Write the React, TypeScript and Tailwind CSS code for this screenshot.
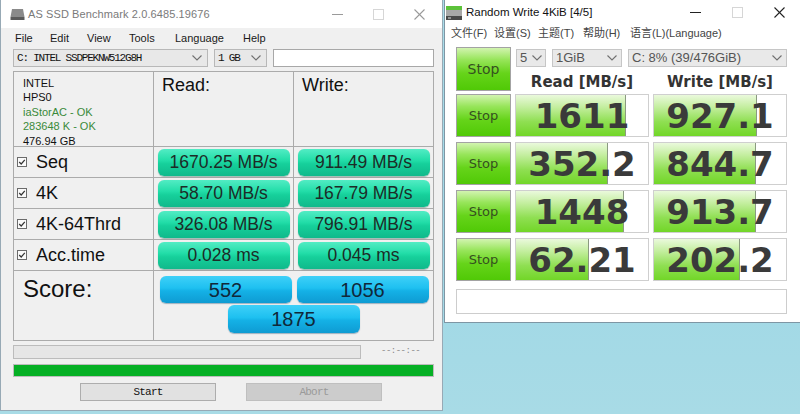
import React from "react";

const Chevron = () => (
  <svg width="10" height="6" viewBox="0 0 10 6">
    <polyline points="0.5,0.5 5,5 9.5,0.5" fill="none" stroke="#707070" strokeWidth="1.1" />
  </svg>
);

const MinIcon = ({ c }: { c: string }) => (
  <svg width="11" height="11" viewBox="0 0 11 11">
    <line x1="0" y1="5.5" x2="11" y2="5.5" stroke={c} strokeWidth="1" />
  </svg>
);
const MaxIcon = () => (
  <svg width="11" height="11" viewBox="0 0 11 11">
    <rect x="0.5" y="0.5" width="10" height="10" fill="none" stroke="#d6d6d6" strokeWidth="1" />
  </svg>
);
const CloseIcon = ({ c }: { c: string }) => (
  <svg width="11" height="11" viewBox="0 0 11 11">
    <line x1="0.5" y1="0.5" x2="10.5" y2="10.5" stroke={c} strokeWidth="1.1" />
    <line x1="10.5" y1="0.5" x2="0.5" y2="10.5" stroke={c} strokeWidth="1.1" />
  </svg>
);

const Check = () => (
  <svg width="10" height="10" viewBox="0 0 10 10">
    <rect x="0.5" y="0.5" width="9" height="9" fill="#fafafa" stroke="#6b6b6b" strokeWidth="1" />
    <polyline points="2.2,5 4.2,7 7.8,2.8" fill="none" stroke="#333" strokeWidth="1.2" />
  </svg>
);

const teal =
  "bg-[linear-gradient(to_bottom,#52ecc4_0%,#22dda8_42%,#16d09b_55%,#10b98b_100%)] shadow-[0_1px_1px_rgba(0,80,60,0.35)]";
const blue =
  "bg-[linear-gradient(to_bottom,#3ed0f8_0%,#1ec0f0_45%,#14b1e6_55%,#0e9bd2_100%)] shadow-[0_1px_1px_rgba(0,60,100,0.35)]";

function LeftWindow() {
  const rows = [
    { n: "Seq", r: "1670.25 MB/s", w: "911.49 MB/s" },
    { n: "4K", r: "58.70 MB/s", w: "167.79 MB/s" },
    { n: "4K-64Thrd", r: "326.08 MB/s", w: "796.91 MB/s" },
    { n: "Acc.time", r: "0.028 ms", w: "0.045 ms" },
  ];
  return (
    <div className="w-[443px] h-[411px] shrink-0 flex flex-col bg-[#f0f0f0] border-l border-r border-b border-[#97a9b5] font-['Liberation_Sans',Arial,sans-serif]">
      {/* title */}
      <div className="h-[28px] bg-white flex items-center pl-[9px]">
        <svg width="15" height="12" viewBox="0 0 15 12">
          <path d="M2 1 H13 L14.5 9 H0.5 Z" fill="#8a8a8a" />
          <rect x="0.5" y="9" width="14" height="3" fill="#5a5a5a" />
        </svg>
        <span className="ml-[3px] text-[11px] text-[#7a7a7a] tracking-[0.1px]">AS SSD Benchmark 2.0.6485.19676</span>
        <div className="ml-auto flex mr-[2px]">
          <div className="w-[41px] flex justify-center"><MinIcon c="#9a9a9a" /></div>
          <div className="w-[41px] flex justify-center"><MaxIcon /></div>
          <div className="w-[41px] flex justify-center"><CloseIcon c="#9a9a9a" /></div>
        </div>
      </div>
      {/* menu */}
      <div className="h-[20px] flex items-center pl-[14px] text-[11px] text-[#1a1a1a]">
        <span className="w-[35px]">File</span>
        <span className="w-[37px]">Edit</span>
        <span className="w-[42px]">View</span>
        <span className="w-[46px]">Tools</span>
        <span className="w-[68px]">Language</span>
        <span>Help</span>
      </div>
      {/* combos */}
      <div className="mt-[1px] h-[18px] flex pl-[12px] gap-[6px]">
        <div className="w-[195px] h-[18px] border border-[#b8b8b8] bg-[#e8e8e8] flex items-center pl-[3px] pr-[5px]">
          <span className="font-['Liberation_Mono',monospace] text-[11px] tracking-[-1.2px] text-[#111]">C: INTEL SSDPEKNW512G8H</span>
          <span className="ml-auto"><Chevron /></span>
        </div>
        <div className="w-[53px] h-[18px] border border-[#b8b8b8] bg-[#e8e8e8] flex items-center pl-[3px] pr-[5px]">
          <span className="font-['Liberation_Mono',monospace] text-[11px] tracking-[-1.2px] text-[#111]">1 GB</span>
          <span className="ml-auto"><Chevron /></span>
        </div>
        <div className="w-[161px] h-[18px] border border-[#a8a8a8] bg-white" />
      </div>
      {/* grid */}
      <div className="ml-[12px] mt-[4px] w-[421px] border-l border-t border-[#ababab]">
        <div className="h-[75px] flex border-b border-[#ababab]">
          <div className="w-[140px] border-r border-[#ababab] pl-[9px] pt-[4px] text-[11px] leading-[14.4px]">
            <div className="text-[#111]">INTEL</div>
            <div className="text-[#111]">HPS0</div>
            <div className="text-[#3a8a3a]">iaStorAC - OK</div>
            <div className="text-[#3a8a3a]">283648 K - OK</div>
            <div className="text-[#111]">476.94 GB</div>
          </div>
          <div className="w-[140px] border-r border-[#ababab] pl-[8px] pt-[2px] text-[18px] leading-[22px] text-[#111]">Read:</div>
          <div className="w-[140px] border-r border-[#ababab] pl-[8px] pt-[2px] text-[18px] leading-[22px] text-[#111]">Write:</div>
        </div>
        {rows.map((r) => (
          <div key={r.n} className="h-[31px] flex border-b border-[#ababab]">
            <div className="w-[140px] border-r border-[#ababab] pl-[3px] flex items-center">
              <Check />
              <span className="ml-[9px] text-[18px] text-[#111]">{r.n}</span>
            </div>
            <div className="w-[140px] border-r border-[#ababab] flex justify-center items-center">
              <div className={`w-[132px] h-[27px] rounded-[6px] ${teal} flex items-center justify-center text-[17.5px] text-[#1d2b27]`}>{r.r}</div>
            </div>
            <div className="w-[140px] border-r border-[#ababab] flex justify-center items-center">
              <div className={`w-[132px] h-[27px] rounded-[6px] ${teal} flex items-center justify-center text-[17.5px] text-[#1d2b27]`}>{r.w}</div>
            </div>
          </div>
        ))}
        <div className="h-[70px] flex border-b border-[#ababab]">
          <div className="w-[140px] border-r border-[#ababab] pl-[9px] pt-[4px] text-[24px] leading-[28px] text-[#111]">Score:</div>
          <div className="flex-1 border-r border-[#ababab] pt-[5px] flex flex-col items-center gap-[2px]">
            <div className="flex gap-[5px] pl-[1px]">
              <div className={`w-[132px] h-[27px] rounded-[6px] ${blue} flex items-center justify-center text-[20px] text-[#10283a]`}>552</div>
              <div className={`w-[132px] h-[27px] rounded-[6px] ${blue} flex items-center justify-center text-[20px] text-[#10283a]`}>1056</div>
            </div>
            <div className={`w-[132px] h-[28px] rounded-[6px] ${blue} flex items-center justify-center text-[20px] text-[#10283a]`}>1875</div>
          </div>
        </div>
      </div>
      {/* progress */}
      <div className="mt-[4px] ml-[12px] h-[14px] flex items-center">
        <div className="w-[348px] h-[14px] border border-[#bcbcbc] bg-[#e6e6e6]" />
        <span className="ml-[20px] font-['Liberation_Mono',monospace] text-[9px] tracking-[-0.5px] text-[#888]">--:--:--</span>
      </div>
      <div className="mt-[5px] ml-[12px] w-[421px] h-[13px] border border-[#bcbcbc] bg-[#06b025]" />
      <div className="mt-[6px] pl-[79px] flex gap-[30px]">
        <div className="w-[136px] h-[18px] border border-[#adadad] bg-[#e1e1e1] flex items-center justify-center font-['Liberation_Mono',monospace] text-[11px] tracking-[-0.8px] text-[#111]">Start</div>
        <div className="w-[136px] h-[18px] border border-[#bfbfbf] bg-[#cccccc] flex items-center justify-center font-['Liberation_Mono',monospace] text-[11px] tracking-[-0.8px] text-[#9a9a9a]">Abort</div>
      </div>
    </div>
  );
}

const stopBg =
  "bg-[linear-gradient(to_bottom,#d2f4b0_0%,#97e55a_28%,#66d41a_60%,#50c906_100%)] border border-[#a3a3a3]";
const fillBg =
  "bg-[linear-gradient(to_bottom,#eaf9dc_0%,#c3ee9e_30%,#8fdf52_65%,#72d628_100%)]";

function ValueCell({ v, p }: { v: string; p: number }) {
  return (
    <div className="relative w-[134px] h-[43px] border border-[#cfcfcf] bg-white flex items-center justify-center overflow-hidden">
      <div className={`absolute left-0 top-0 bottom-0 ${fillBg} border-r border-[#8a9a80]`} style={{ width: `${p}%` }} />
      <span className="relative font-['DejaVu_Sans',sans-serif] font-bold text-[34px] leading-none text-[#3a3a3a]">{v}</span>
    </div>
  );
}

function RightWindow() {
  const rows = [
    { r: "1611", rp: 83, w: "927.1", wp: 78 },
    { r: "352.2", rp: 70, w: "844.7", wp: 77 },
    { r: "1448", rp: 82, w: "913.7", wp: 77.5 },
    { r: "62.21", rp: 55, w: "202.2", wp: 65 },
  ];
  return (
    <div className="ml-[1px] w-[356px] h-[323px] shrink-0 flex flex-col bg-white border-l border-b border-[#7e96a4] font-['Liberation_Sans','Noto_Sans_CJK_SC',sans-serif]">
      <div className="h-[25px] flex items-center pl-[1px]">
        <svg width="16" height="14" viewBox="0 0 16 14">
          <rect x="0" y="0" width="16" height="4" fill="#5cc23a" />
          <rect x="0" y="4" width="16" height="6" fill="#a8a8a8" />
          <rect x="0" y="10" width="16" height="4" fill="#4a4a4a" />
          <rect x="2" y="11.5" width="3" height="1" fill="#ddd" />
        </svg>
        <span className="ml-[4px] text-[11.5px] text-[#111]">Random Write 4KiB [4/5]</span>
        <div className="ml-auto flex">
          <div className="w-[42px] flex justify-center"><MinIcon c="#222" /></div>
          <div className="w-[42px] flex justify-center"><MaxIcon /></div>
          <div className="w-[42px] flex justify-center"><CloseIcon c="#222" /></div>
        </div>
      </div>
      <div className="h-[16px] flex items-center pl-[6px] text-[11px] text-[#444]">
        <span className="w-[43px]">文件(F)</span>
        <span className="w-[44px]">设置(S)</span>
        <span className="w-[45px]">主题(T)</span>
        <span className="w-[47px]">帮助(H)</span>
        <span>语言(L)(Language)</span>
      </div>
      <div className="mt-[6px] pl-[11px] flex">
        <div className={`w-[55px] h-[44px] ${stopBg} flex items-center justify-center font-['DejaVu_Sans',sans-serif] text-[14px] text-[#355020]`}>Stop</div>
        <div className="ml-[4px] flex flex-col">
          <div className="mt-[2px] h-[18px] flex pl-[1px] gap-[6px] text-[13px] text-[#555]">
            <div className="w-[30px] h-[18px] border border-[#c6c6c6] bg-[#e9e9e9] flex items-center pl-[3px] pr-[3px]">
              <span>5</span>
              <span className="ml-auto"><Chevron /></span>
            </div>
            <div className="w-[70px] h-[18px] border border-[#c6c6c6] bg-[#e9e9e9] flex items-center pl-[3px] pr-[4px]">
              <span>1GiB</span>
              <span className="ml-auto"><Chevron /></span>
            </div>
            <div className="w-[159px] h-[18px] border border-[#c6c6c6] bg-[#e9e9e9] flex items-center pl-[3px] pr-[4px]">
              <span>C: 8% (39/476GiB)</span>
              <span className="ml-auto"><Chevron /></span>
            </div>
          </div>
          <div className="h-[24px] flex gap-[4px] pt-[6px] font-['DejaVu_Sans',sans-serif] font-bold text-[15px] leading-[18px] text-[#333]">
            <div className="w-[134px] text-center">Read [MB/s]</div>
            <div className="w-[134px] text-center">Write [MB/s]</div>
          </div>
        </div>
      </div>
      <div className="mt-[3px] pl-[11px] flex flex-col gap-[5px]">
        {rows.map((r, i) => (
          <div key={i} className="flex gap-[4px]">
            <div className={`w-[55px] h-[43px] ${stopBg} flex items-center justify-center font-['DejaVu_Sans',sans-serif] text-[13px] text-[#355020]`}>Stop</div>
            <ValueCell v={r.r} p={r.rp} />
            <ValueCell v={r.w} p={r.wp} />
          </div>
        ))}
      </div>
      <div className="mt-[8px] ml-[11px] w-[331px] h-[25px] border border-[#cdcdcd] bg-white" />
    </div>
  );
}

export default function App() {
  return (
    <div className="w-[800px] h-[414px] overflow-hidden flex items-start bg-[linear-gradient(to_bottom,#a9dde9_0%,#9fd8e6_60%,#a8dbe6_100%)]">
      <LeftWindow />
      <RightWindow />
    </div>
  );
}
